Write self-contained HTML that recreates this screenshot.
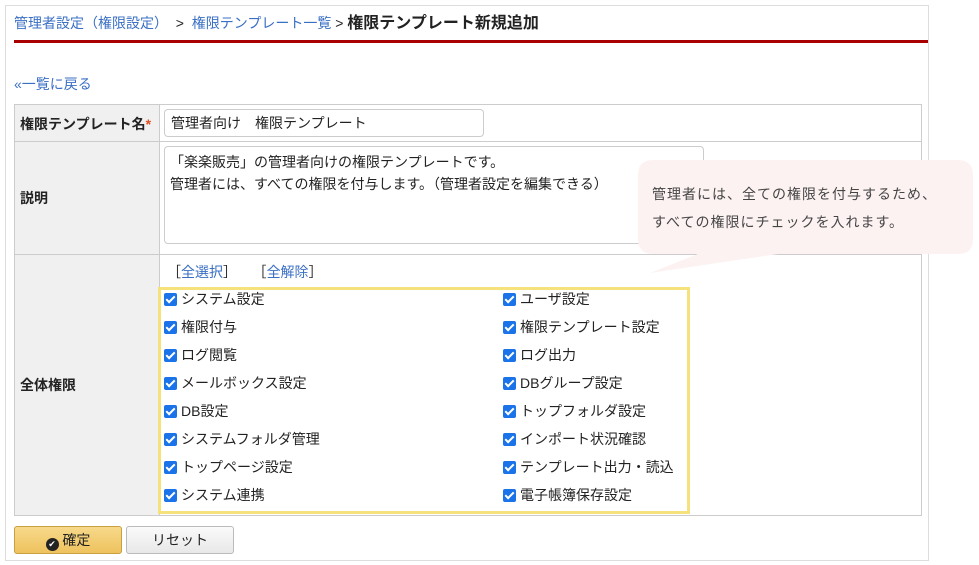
<!DOCTYPE html><html><head><meta charset="utf-8"><style>
body{margin:0;width:979px;height:565px;background:#fff;font-family:"Liberation Sans","Noto Sans CJK JP",sans-serif;font-size:14px;color:#222;position:relative;overflow:hidden}
.a{position:absolute}
a{color:#3a6fc4;text-decoration:none}
.cb{position:absolute;width:13px;height:13px;background:#1a73e8;border-radius:2px}
.cb:after{content:"";position:absolute;left:4px;top:1px;width:3px;height:7px;border:solid #fff;border-width:0 2px 2px 0;transform:rotate(45deg)}
.lbl{position:absolute;font-size:14px;line-height:16px}
</style></head><body>
<div class="a" style="left:5px;top:5px;width:922px;height:554px;border:1px solid #ddd"></div>
<div class="a" style="left:14px;top:9px;font-size:14px;white-space:nowrap"><a>管理者設定（権限設定）</a>&nbsp;&nbsp;&gt;&nbsp;&nbsp;<a>権限テンプレート一覧</a> &gt; <b style="font-size:16px">権限テンプレート新規追加</b></div>
<div class="a" style="left:14px;top:40px;width:914px;height:3px;background:#a80000"></div>
<div class="a" style="left:14px;top:74px"><a>«一覧に戻る</a></div>
<div class="a" style="left:14px;top:104px;width:906px;height:410px;border:1px solid #ccc"></div>
<div class="a" style="left:15px;top:105px;width:144px;height:410px;background:#f0f0f0;border-right:1px solid #ccc"></div>
<div class="a" style="left:14px;top:141px;width:908px;height:1px;background:#ccc"></div>
<div class="a" style="left:14px;top:254px;width:908px;height:1px;background:#ccc"></div>
<div class="a" style="left:20px;top:114px;font-weight:bold">権限テンプレート名<span style="color:#e05020">*</span></div>
<div class="a" style="left:20px;top:188px;font-weight:bold">説明</div>
<div class="a" style="left:20px;top:375px;font-weight:bold">全体権限</div>
<div class="a" style="left:164px;top:109px;width:312px;height:26px;border:1px solid #ccc;border-radius:4px;padding-left:6px;line-height:26px;font-size:14px">管理者向け　権限テンプレート</div>
<div class="a" style="left:164px;top:146px;width:528px;height:88px;border:1px solid #ccc;border-radius:4px;padding:4px 5px;line-height:22px;font-size:14px">「楽楽販売」の管理者向けの権限テンプレートです。<br>管理者には、すべての権限を付与します。（管理者設定を編集できる）</div>
<div class="a" style="left:167px;top:262px">［<a>全選択</a>］&nbsp;&nbsp;&nbsp;&nbsp;［<a>全解除</a>］</div>
<div class="a" style="left:158px;top:287px;width:526px;height:221px;border:3px solid #f5e27a"></div>
<div id="cbs"></div>
<svg class="a" style="left:638px;top:160px" width="340" height="120"><path d="M15 0H320Q335 0 335 15V79Q335 94 320 94H140L12 113L60 94H15Q0 94 0 79V15Q0 0 15 0Z" fill="#fdf2f2"/></svg>
<div class="a" style="left:652px;top:180px;font-size:14px;line-height:28px;color:#444;letter-spacing:1px">管理者には、全ての権限を付与するため、<br>すべての権限にチェックを入れます。</div>
<div class="a" style="left:14px;top:526px;width:106px;height:26px;border:1px solid #c9a040;border-radius:3px;background:linear-gradient(#f7d98a,#eec25e);text-align:center;line-height:26px"><span style="display:inline-block;width:13px;height:13px;border-radius:50%;background:#222;color:#fff;font-size:9px;line-height:13px;vertical-align:-2px">✔</span> 確定</div>
<div class="a" style="left:126px;top:526px;width:106px;height:26px;border:1px solid #bbb;border-radius:3px;background:linear-gradient(#fafafa,#e8e8e8);text-align:center;line-height:26px">リセット</div>
<script>
var L=["システム設定","権限付与","ログ閲覧","メールボックス設定","DB設定","システムフォルダ管理","トップページ設定","システム連携"],R=["ユーザ設定","権限テンプレート設定","ログ出力","DBグループ設定","トップフォルダ設定","インポート状況確認","テンプレート出力・読込","電子帳簿保存設定"],h="";
for(var i=0;i<8;i++){var y=293+i*28;h+='<div class="cb" style="left:164px;top:'+y+'px"></div><div class="lbl" style="left:181px;top:'+(y-2)+'px">'+L[i]+'</div><div class="cb" style="left:503px;top:'+y+'px"></div><div class="lbl" style="left:520px;top:'+(y-2)+'px">'+R[i]+'</div>';}
document.getElementById("cbs").innerHTML=h;
</script>
</body></html>
